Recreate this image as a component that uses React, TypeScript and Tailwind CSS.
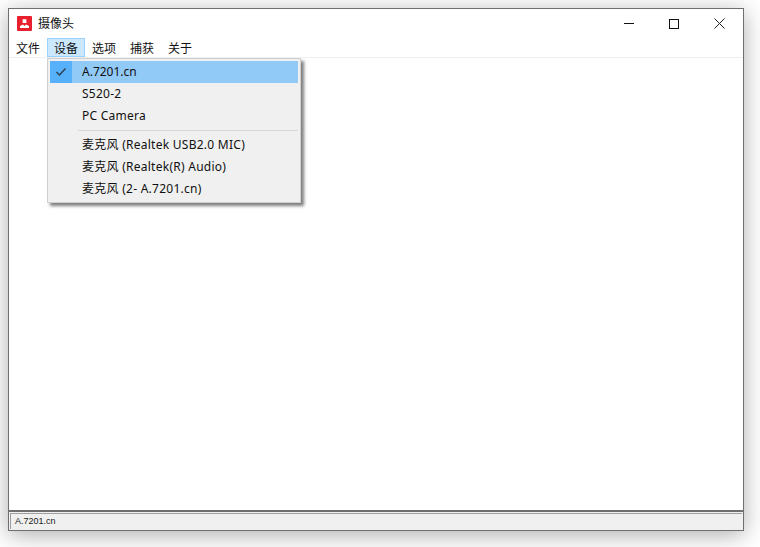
const font = { fontFamily: '"Noto Sans", "Noto Sans CJK SC", sans-serif' };

const menus = ['文件', '设备', '选项', '捕获', '关于'];

const MenuRow = ({ label, active }: { label: string; active?: boolean }) => (
  <div className={`flex h-[22px] items-center ${active ? 'bg-[#91c9f7]' : ''}`}>
    <div className={`flex h-[22px] w-[22px] items-center justify-center ${active ? 'bg-[#56b0fa]' : ''}`}>
      {active && (
        <svg width="12" height="10" viewBox="0 0 12 10" fill="none" stroke="#2f3e4c" strokeWidth="1.4">
          <path d="M1.5 5 L4.5 8 L10.5 1.5" />
        </svg>
      )}
    </div>
    <span className={`ml-[10px] whitespace-nowrap text-[12px] text-[#111] ${active ? '' : 'tracking-[0.26px]'}`}>{label}</span>
  </div>
);

export default function App() {
  return (
    <div className="h-[547px] w-[760px] overflow-hidden bg-white pl-2 pt-2" style={font}>
      <div className="relative flex h-[523px] w-[736px] flex-col border border-[#6f6f6f] bg-white shadow-[0_4px_22px_rgba(0,0,0,0.32)]">
        <div className="flex h-[29px] items-center">
          <div className="ml-[8px] flex h-[15px] w-[15px] items-center justify-center rounded-[1px] bg-[#e8202e]">
            <svg width="11" height="11" viewBox="0 0 11 11" fill="#fff">
              <path d="M3.6 1.2 H7.4 V5 H3.6 Z" />
              <path d="M1 10 L1 8 L4 6.4 L5.5 8 L7 6.4 L10 8 L10 10 Z" />
            </svg>
          </div>
          <span className="ml-[6px] text-[12px] text-[#111]">摄像头</span>
          <div className="ml-auto flex h-full items-center">
            <svg width="10" height="2" viewBox="0 0 10 2" className="mr-[35px]">
              <rect width="10" height="1" fill="#111" />
            </svg>
            <svg width="10" height="10" viewBox="0 0 10 10" className="mr-[35px]" fill="none" stroke="#111">
              <rect x="0.5" y="0.5" width="9" height="9" />
            </svg>
            <svg width="11" height="11" viewBox="0 0 11 11" className="mr-[18px]" fill="none" stroke="#222">
              <path d="M0.5 0.5 L10.5 10.5 M10.5 0.5 L0.5 10.5" />
            </svg>
          </div>
        </div>

        <div className="flex h-[20px] items-center border-b border-[#f0f0f0]">
          {menus.map((m) => (
            <div
              key={m}
              className={`flex h-[19px] w-[38px] items-center justify-center pt-[2px] text-[12px] text-[#111] ${
                m === '设备' ? 'border border-[#99d1ff] bg-[#cce8ff]' : ''
              }`}
            >
              {m}
            </div>
          ))}
        </div>

        <div className="flex-1" />

        <div className="h-[20px] border-t-2 border-[#6f6f6f] bg-[#f0f0f0] p-[1px]">
          <div
            className="flex h-full items-center border-t border-l border-[#a0a0a0] border-r-white border-b-white pl-[4px] text-[9px] text-[#222]"
            style={{ fontFamily: '"Liberation Sans", sans-serif' }}
          >
            A.7201.cn
          </div>
        </div>

        <div className="absolute left-[38px] top-[49px] h-[145px] w-[254px] border border-[#cfcfcf] bg-[#f0f0f0] p-[2px] shadow-[3px_3px_3px_rgba(0,0,0,0.5)]">
          <MenuRow label="A.7201.cn" active />
          <MenuRow label="S520-2" />
          <MenuRow label="PC Camera" />
          <div className="my-[3px] ml-[28px] h-px bg-[#d7d7d7]" />
          <MenuRow label="麦克风 (Realtek USB2.0 MIC)" />
          <MenuRow label="麦克风 (Realtek(R) Audio)" />
          <MenuRow label="麦克风 (2- A.7201.cn)" />
        </div>
      </div>
    </div>
  );
}
